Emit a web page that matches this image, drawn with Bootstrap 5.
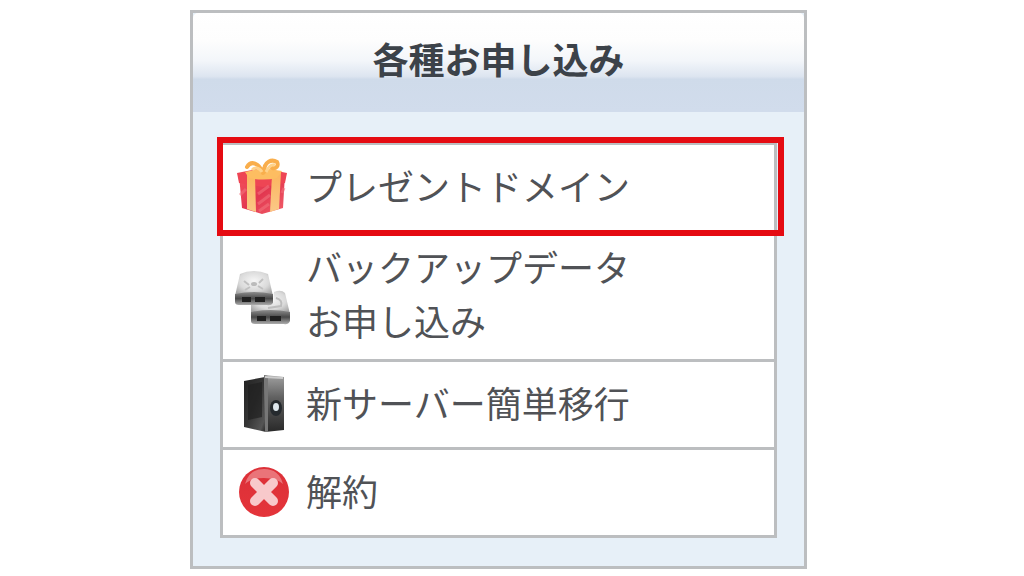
<!DOCTYPE html>
<html lang="ja">
<head>
<meta charset="utf-8">
<meta name="viewport" content="width=device-width, initial-scale=1">
<title>各種お申し込み</title>
<link href="https://cdn.jsdelivr.net/npm/bootstrap@5.3.0/dist/css/bootstrap.min.css" rel="stylesheet">
<style>
  body {
    background: #fff;
    color: #505256;
    font-family: "Noto Sans CJK JP", sans-serif;
    font-size: 36px;
    line-height: 54px;
  }
  .page-grid {
    display: grid;
    grid-template-columns: 190fr 617fr 217fr;
    padding: 10px 0 6px;
  }
  .apply-panel {
    grid-column: 2;
    background: #e7f0f8;
    border: 3px solid #bcbec0;
    border-radius: 0;
  }
  .apply-title {
    padding: 18px 12px 27px;
    border: 0;
    border-radius: 0;
    background: linear-gradient(#fff 0%, #fdfdfd 28%, #f3f6fa 48%, #dde5f0 64%, #cfdbea 67%, #d1dcec 100%);
  }
  .apply-title h1 {
    font-size: 36px;
    line-height: 54px;
    color: #3c4249;
  }
  .apply-body { padding: 30px 27px 28px; }
  .apply-list { border: 3px solid #bcbec0; background: #fff; }
  .apply-list li + li { border-top: 3px solid #bcbec0; }
  .apply-link {
    min-height: 85px;
    padding: 6px 12px 5px;
    gap: 15px;
    color: inherit;
  }
  .apply-link span { padding-bottom: 7px; }
  .apply-link svg { width: 56px; height: 60px; }
  .callout-frame {
    inset: -8px -10px -6px -6px;
    border: 6px solid #e50b12;
    pointer-events: none;
    z-index: 1;
  }
</style>
</head>
<body>
<main class="page-grid">
  <section class="card apply-panel">
    <div class="card-header apply-title text-center">
      <h1 class="fw-bold m-0">各種お申し込み</h1>
    </div>
    <div class="apply-body">
      <ul class="apply-list list-unstyled m-0">
        <li class="position-relative">
          <a class="apply-link d-flex align-items-center text-decoration-none" href="#">
            <svg class="flex-shrink-0" viewBox="0 0 56 60" aria-hidden="true">
              <defs>
                <linearGradient id="giftRed" x1="0" y1="0" x2="1" y2="1"><stop offset="0" stop-color="#f4525c"/><stop offset=".5" stop-color="#e23750"/><stop offset="1" stop-color="#f2606a"/></linearGradient>
                <linearGradient id="giftGold" x1="0" y1="0" x2="0" y2="1"><stop offset="0" stop-color="#fbb45c"/><stop offset="1" stop-color="#fbc887"/></linearGradient>
              </defs>
              <path d="M4 17 28 20 50 16 48 50 27 56 7 50Z" fill="url(#giftRed)"/>
              <path d="M2 15 27 10 52 15 50 25 28 29 4 25Z" fill="#ee4554"/>
              <path d="M12 14 20 18 21 54 12 51Z" fill="url(#giftGold)"/>
              <path d="M37 17 46 14 44 51 35 54Z" fill="url(#giftGold)"/>
              <path d="M10 14 27 10 47 13 42 20Q28 23 14 20Z" fill="#fdbd61"/>
              <path d="M28 15C24 5 16 2 12 9M29 14C29 3 37 1 42 4 44 8 41 11 37 10" fill="none" stroke="#f9ae4c" stroke-width="4" stroke-linecap="round"/>
              <path d="M27 14C24 9 19 9 17 12M31 14C34 8 37 6 40 7" fill="none" stroke="#ffd28a" stroke-width="3"/>
              <path d="M23 36 34 28M23 46 35 37M24 53 34 46M5 37 11 31M47 35 49 30" stroke="#f2717c" stroke-width="3" opacity=".6"/>
            </svg>
            <span>プレゼントドメイン</span>
          </a>
          <div class="callout-frame position-absolute"></div>
        </li>
        <li>
          <a class="apply-link d-flex align-items-center text-decoration-none" href="#">
            <svg class="flex-shrink-0" viewBox="0 0 56 60" aria-hidden="true">
              <defs>
                <radialGradient id="diskTop" cx=".5" cy=".4" r=".65"><stop offset="0" stop-color="#f6f6f6"/><stop offset=".6" stop-color="#dadada"/><stop offset="1" stop-color="#a5a5a5"/></radialGradient>
                <linearGradient id="diskFront" x1="0" y1="0" x2="0" y2="1"><stop offset="0" stop-color="#8c8c8c"/><stop offset=".5" stop-color="#484848"/><stop offset="1" stop-color="#b0b0b0"/></linearGradient>
              </defs>
              <path d="M39 25Q46 22 50 26L55 47H16V38L38 36Z" fill="url(#diskTop)"/>
              <path d="M41 31Q48 33 46 39L33 41" fill="none" stroke="#bdbdbd" stroke-width="2"/>
              <path d="M16 45Q36 41 55 45V54Q53 58 49 57H20Q16 57 16 54Z" fill="url(#diskFront)"/>
              <path d="M22 49H31V54H22ZM35 49H46V54H35Z" fill="#202020"/>
              <path d="M5 7Q18 1 33 7L38 29H0Z" fill="url(#diskTop)"/>
              <path d="M9 14 14 18M28 12 24 16M10 23 15 20M28 22 23 19" stroke="#c0c0c0" stroke-width="2"/>
              <ellipse cx="19" cy="17" rx="3" ry="2" fill="#bbb"/>
              <path d="M0 27Q19 23 38 27V36Q36 39 32 38H4Q0 38 0 35Z" fill="url(#diskFront)"/>
              <path d="M7 30H16V35H7ZM20 30H30V35H20Z" fill="#202020"/>
            </svg>
            <span>バックアップデータ<br>お申し込み</span>
          </a>
        </li>
        <li>
          <a class="apply-link d-flex align-items-center text-decoration-none" href="#">
            <svg class="flex-shrink-0" viewBox="0 2 56 60" aria-hidden="true">
              <defs>
                <linearGradient id="towerSide" x1="0" y1="0" x2="1" y2="1"><stop offset="0" stop-color="#222"/><stop offset=".5" stop-color="#363636"/><stop offset=".85" stop-color="#555"/><stop offset="1" stop-color="#202020"/></linearGradient>
                <linearGradient id="towerFront" x1="0" y1="0" x2="0" y2="1"><stop offset="0" stop-color="#a0a0a0"/><stop offset=".4" stop-color="#606060"/><stop offset="1" stop-color="#292929"/></linearGradient>
              </defs>
              <path d="M9 8 30 4 31 59 9 54Z" fill="url(#towerSide)"/>
              <path d="M13 12 27 9V44L13 47Z" fill="#202020" opacity=".7"/>
              <path d="M29 2 49 4V57L30 59Z" fill="url(#towerFront)"/>
              <path d="M29 2 33 3V59L30 59Z" fill="#777"/>
              <path d="M30 4 48 5" stroke="#ccc" stroke-width="2"/>
              <ellipse cx="41" cy="35" rx="6" ry="8" fill="#252a2e"/>
              <ellipse cx="41" cy="34" rx="3" ry="4" fill="#dde7ed"/>
            </svg>
            <span>新サーバー簡単移行</span>
          </a>
        </li>
        <li>
          <a class="apply-link d-flex align-items-center text-decoration-none" href="#">
            <svg class="flex-shrink-0" viewBox="0 2 56 60" aria-hidden="true">
              <defs>
                <linearGradient id="cancelRed" x1="0" y1="0" x2="0" y2="1"><stop offset="0" stop-color="#dc3038"/><stop offset="1" stop-color="#e4343a"/></linearGradient>
              </defs>
              <circle cx="29" cy="31" r="25" fill="url(#cancelRed)"/>
              <path d="M10 23Q14 8 29 8 44 8 48 23 42 17 29 17 16 17 10 23Z" fill="#ea7479"/>
              <path d="M20 22 38 40M38 22 20 40" stroke="#f8c9cb" stroke-width="10" stroke-linecap="round"/>
            </svg>
            <span>解約</span>
          </a>
        </li>
      </ul>
    </div>
  </section>
</main>
<script src="https://cdn.jsdelivr.net/npm/bootstrap@5.3.0/dist/js/bootstrap.bundle.min.js"></script>
</body>
</html>
